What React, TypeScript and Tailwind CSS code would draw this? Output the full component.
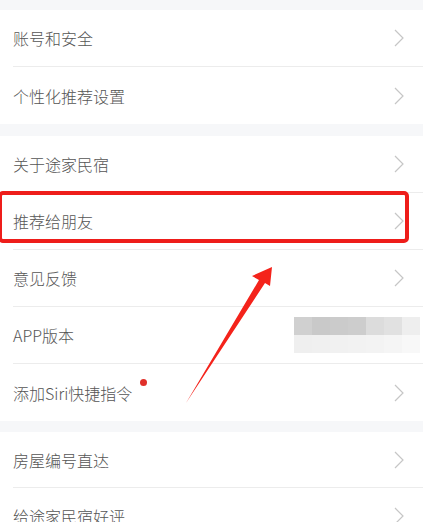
import React from 'react';

type Item = { label: string; dot?: boolean; blurred?: boolean };

const groups: Item[][] = [
  [{ label: '账号和安全' }, { label: '个性化推荐设置' }],
  [
    { label: '关于途家民宿' },
    { label: '推荐给朋友' },
    { label: '意见反馈' },
    { label: 'APP版本', blurred: true },
    { label: '添加Siri快捷指令', dot: true },
  ],
  [{ label: '房屋编号直达' }, { label: '给途家民宿好评' }],
];

const topBlocks = ['#d0d0d0', '#c9c9c9', '#cbcbcb', '#cdcdcd', '#dcdcdc', '#e1e1e1', '#eeeeee'];
const bottomBlocks = ['#efefef', '#f0f0f0', '#f1f1f1', '#f2f2f2', '#f3f3f3', '#f5f5f5', '#f8f8f8'];

const Chevron = () => (
  <svg width="10" height="18" viewBox="0 0 10 18" fill="none" className="shrink-0">
    <path d="M1 1l8 8-8 8" stroke="#c6c6c6" strokeWidth="1.2" />
  </svg>
);

const Row: React.FC<{ item: Item; last: boolean; compact: boolean }> = ({ item, last, compact }) => (
  <div className="bg-white pl-[13px]">
    <div
      className={`flex items-center justify-between pr-[19px] ${compact ? 'h-[56px]' : 'h-[57px]'} ${
        last ? '' : 'border-b border-[#ececec]'
      }`}
    >
      <div className="flex items-center">
        <span className="text-[16px] font-light text-[#555555]">{item.label}</span>
        {item.dot && <span className="relative -top-[10px] ml-[8px] h-[7px] w-[7px] rounded-full bg-[#e0302a]" />}
      </div>
      {item.blurred ? (
        <div className="-mr-[16px] flex flex-col">
          <div className="flex h-[18px]">
            {topBlocks.map((c, i) => (
              <div key={i} className="h-full w-[18px]" style={{ backgroundColor: c }} />
            ))}
          </div>
          <div className="flex h-[18px]">
            {bottomBlocks.map((c, i) => (
              <div key={i} className="h-full w-[18px]" style={{ backgroundColor: c }} />
            ))}
          </div>
        </div>
      ) : (
        <Chevron />
      )}
    </div>
  </div>
);

export default function App() {
  return (
    <div
      className="relative h-[522px] w-[431px] overflow-hidden bg-white"
      style={{ fontFamily: '"Noto Sans CJK SC", "Noto Sans", sans-serif' }}
    >
      <div className="w-[423px] bg-[#f6f7f9]">
        {groups.map((g, gi) => (
          <div key={gi} className={gi === 0 ? 'pt-[10px]' : gi === 1 ? 'pt-[12px]' : 'pt-[11px]'}>
            {g.map((item, i) => (
              <Row key={item.label} item={item} last={i === g.length - 1} compact={gi === 2} />
            ))}
          </div>
        ))}
      </div>

      {/* highlight box */}
      <div className="pointer-events-none absolute left-[-2px] top-[191px] h-[52px] w-[411px] rounded-[5px] border-[4px] border-[#ee1d1a]" />

      {/* arrow */}
      <svg className="pointer-events-none absolute left-0 top-0" width="431" height="522" viewBox="0 0 431 522">
        <polygon points="186,403 259,280 252,276 272,267 270,286 265,283" fill="#f4231b" />
      </svg>
    </div>
  );
}
